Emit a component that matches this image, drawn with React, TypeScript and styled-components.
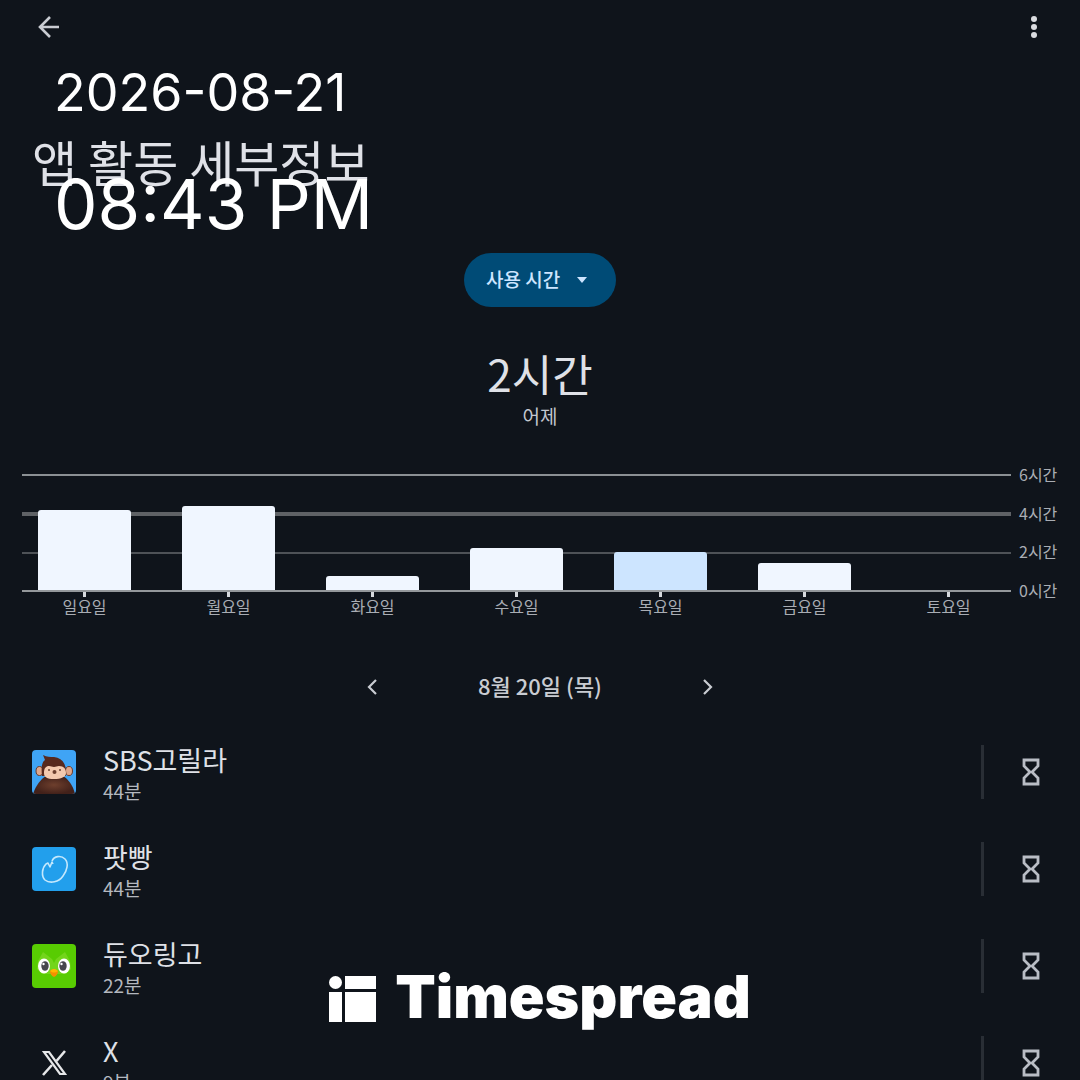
import React from "react";
import styled, { createGlobalStyle } from "styled-components";

const GlobalStyle = createGlobalStyle`
  * { box-sizing: border-box; }
  body {
    margin: 0;
    background: #0f141b;
    color: #dfe1e7;
    font-family: "Noto Sans CJK KR", sans-serif;
  }
  button { padding: 0; border: 0; background: none; color: inherit; font: inherit; cursor: pointer; }
`;

const Screen = styled.div`
  position: relative;
  height: 100vh;
  overflow: hidden;
  display: flex;
  flex-direction: column;
`;

const TopBar = styled.header`
  display: flex;
  justify-content: space-between;
  flex: none;
  height: 54px;
  padding: 0 22px 0 25px;
`;

const IconButton = styled.button`
  display: grid;
  place-items: center;
  width: 48px;
  height: 54px;
  color: #c9ccd2;
`;

const Title = styled.h1`
  margin: 0;
  padding: 71px 32px 0;
  font-size: 49px;
  line-height: 72px;
  font-weight: 400;
`;

const Main = styled.main`
  display: flex;
  flex-direction: column;
  flex: none;
`;

const Picker = styled.div`
  display: grid;
  align-self: center;
  align-items: center;
  margin-top: 56px;
  color: #cde5ff;
`;

const PickerSelect = styled.select`
  grid-area: 1 / 1;
  appearance: none;
  width: 152px;
  height: 54px;
  padding: 0 22px 4px;
  border: 0;
  border-radius: 27px;
  background: #004b76;
  color: inherit;
  font-family: inherit;
  font-size: 19px;
  font-weight: 500;
`;

const PickerArrow = styled.svg`
  grid-area: 1 / 1;
  justify-self: end;
  margin-right: 29px;
  pointer-events: none;
`;

const Total = styled.p`
  margin: 34px 0 0;
  text-align: center;
  font-size: 44px;
  line-height: 64px;
`;

const TotalCaption = styled.p`
  margin: 0;
  text-align: center;
  font-size: 19px;
  line-height: 22px;
  color: #c2c7cf;
`;

const Chart = styled.figure`
  display: grid;
  grid-template-columns: 1fr 39px;
  column-gap: 8px;
  margin: 47px 22px 0;
  color: #a9adb4;
  font-size: 16px;
`;

const Plot = styled.div`
  display: grid;
  height: 118px;
`;

const GridLines = styled.div`
  grid-area: 1 / 1;
  display: flex;
  flex-direction: column;
  justify-content: space-between;
`;

const GridLine = styled.div<{ $weight: number; $color: string }>`
  height: ${(p) => p.$weight}px;
  background: ${(p) => p.$color};
`;

const Bars = styled.div`
  grid-area: 1 / 1;
  display: grid;
  grid-template-columns: repeat(7, 1fr);
  column-gap: 51px;
  align-items: end;
  padding: 2px 16px 2px;
`;

const Bar = styled.div<{ $selected: boolean }>`
  border-radius: 3px 3px 0 0;
  background: ${(p) => (p.$selected ? "#cde5ff" : "#f0f6ff")};
`;

const Scale = styled.div`
  display: flex;
  flex-direction: column;
  justify-content: space-between;
  margin: -11px 0 -9px;
  line-height: 22px;
  white-space: nowrap;
`;

const Days = styled.div`
  display: grid;
  grid-template-columns: repeat(7, 1fr);
  column-gap: 51px;
  padding: 0 16px;
`;

const Day = styled.div`
  display: flex;
  flex-direction: column;
  align-items: center;
  line-height: 22px;
  white-space: nowrap;

  &::before {
    content: "";
    width: 3px;
    height: 5px;
    margin-bottom: -2px;
    background: #d5d8dc;
  }
`;

const DateNav = styled.nav`
  display: flex;
  align-items: center;
  justify-content: space-between;
  align-self: center;
  width: 383px;
  height: 54px;
  margin-top: 43px;
  font-size: 22px;
  font-weight: 500;
  color: #c9ccd2;
`;

const DateLabel = styled.span`
  padding-bottom: 4px;
`;

const AppList = styled.ul`
  margin: 9px 0 0;
  padding: 0;
  list-style: none;
`;

const AppRow = styled.li`
  display: flex;
  align-items: center;
  height: 97px;
  padding: 0 25px 0 32px;
`;

const AppText = styled.div`
  flex: 1;
  margin-left: 27px;
  padding-top: 2px;
`;

const AppName = styled.div`
  font-size: 27px;
  line-height: 36px;
`;

const AppTime = styled.div`
  font-size: 19px;
  line-height: 26px;
  color: #b4b8bf;
`;

const TimerButton = styled(IconButton)`
  width: 74px;
  padding-left: 22px;
  border-left: 3px solid #292e35;
  color: #b9bdc5;
`;

const Clock = styled.div`
  position: absolute;
  top: 60px;
  left: 54px;
  color: #fff;
  font-family: Inter, sans-serif;
`;

const ClockDate = styled.div`
  font-size: 52px;
  line-height: 66px;
`;

const ClockTime = styled.div`
  margin-top: 34px;
  font-size: 69px;
  line-height: 88px;
`;

const Brand = styled.div`
  position: absolute;
  left: 0;
  right: 0;
  bottom: 48px;
  display: flex;
  justify-content: center;
  align-items: center;
  gap: 18px;
  color: #fff;
  font-family: Inter, sans-serif;
  font-size: 59px;
  font-weight: 900;
  line-height: 70px;
`;

const BrandMark = styled.svg`
  margin-top: 4px;
`;

const week = [
  { day: "일요일", hours: 4.2 },
  { day: "월요일", hours: 4.4 },
  { day: "화요일", hours: 0.75 },
  { day: "수요일", hours: 2.2 },
  { day: "목요일", hours: 2, selected: true },
  { day: "금요일", hours: 1.4 },
  { day: "토요일", hours: 0 },
];

const GorillaIcon = () => (
  <svg width="44" height="44" viewBox="0 0 44 44" aria-hidden="true">
    <defs>
      <clipPath id="gorilla"><rect width="44" height="44" rx="4" /></clipPath>
      <radialGradient id="fur"><stop stopColor="#6e3f2d" /><stop offset="1" stopColor="#42211a" /></radialGradient>
    </defs>
    <g clipPath="url(#gorilla)">
      <rect width="44" height="44" fill="#3fa4f5" />
      <ellipse cx="7.500" cy="21" rx="3.500" ry="4.500" fill="#dfa78c" stroke="#6b3b2b" />
      <ellipse cx="37" cy="21" rx="3.500" ry="4.500" fill="#dfa78c" stroke="#6b3b2b" />
      <path d="M1 44C4 35 9 29 14 26h17c5 3 10 9 12 18Z" fill="url(#fur)" />
      <path d="M10 26C9 17 10 12 13 10L11 5c4 2 7 2 11 2 9 1 13 8 12 19Z" fill="#57291e" />
      <path d="M12 23c0-5 2-7 5-7 2 0 3 1 5 1s3-1 5-1c5 0 7 3 7 7 0 4-5 6-12 6s-10-2-10-6Z" fill="#f3c9af" />
      <circle cx="17" cy="20" r="1" fill="#6a4233" />
      <circle cx="28" cy="20" r="1" fill="#6a4233" />
      <ellipse cx="22.500" cy="22" rx="2" ry="2" fill="#6d4030" />
    </g>
  </svg>
);

const PodIcon = () => (
  <svg width="44" height="44" viewBox="0 0 44 44" fill="none" aria-hidden="true">
    <rect width="44" height="44" rx="4" fill="#229fec" />
    <path d="M20 14c2-5 9-6 13-2 4 4 2 12-2 17-4 6-13 8-18 4-4-4-3-12 1-16l2-1 2 4 2-5 1 2" stroke="#c4e8fd" strokeWidth="1.6" strokeLinejoin="round" />
  </svg>
);

const OwlIcon = () => (
  <svg width="44" height="44" viewBox="0 0 44 44" aria-hidden="true">
    <rect width="44" height="44" rx="4" fill="#58cc02" />
    <path d="M6 17 11 8l9 7 2 4 2-4 9-7 5 9 1 8-5 5H10l-5-5Z" fill="#73d51b" />
    <ellipse cx="12" cy="22" rx="6" ry="7.5" fill="#fff" />
    <ellipse cx="32" cy="22" rx="6" ry="7.5" fill="#fff" />
    <ellipse cx="13" cy="22" rx="3.7" ry="4.8" fill="#47474d" />
    <ellipse cx="31" cy="22" rx="3.7" ry="4.8" fill="#47474d" />
    <circle cx="11.500" cy="20" r="1.2" fill="#fff" />
    <circle cx="29.500" cy="20" r="1.2" fill="#fff" />
    <path d="M18 27q4-4 8 0 0 4-4 6-4-2-4-6Z" fill="#f49000" />
    <path d="M18 27q4-4 8 0-4 3-8 0Z" fill="#ffb800" />
  </svg>
);

const XIcon = () => (
  <svg width="44" height="44" viewBox="0 0 44 44" fill="none" stroke="#e6e7e9" aria-hidden="true">
    <path d="M12 11h5l16 22h-5Z" strokeWidth="2.2" />
    <path d="M33 10 24.500 20M20 24l-9 10" strokeWidth="2.6" />
  </svg>
);

const Hourglass = () => (
  <svg width="18" height="28" viewBox="0 0 18 28" fill="none" stroke="currentColor" strokeWidth="2.8" aria-hidden="true">
    <path d="M2 2h14v6l-6 6 6 6v6H2v-6l6-6-6-6Z" />
  </svg>
);

const Chevron = ({ flip = false }: { flip?: boolean }) => (
  <svg width="16" height="18" viewBox="0 0 16 18" fill="none" stroke="currentColor" strokeWidth="2.2" aria-hidden="true">
    <path d={flip ? "m4 2 7 7-7 7" : "m11 2-7 7 7 7"} />
  </svg>
);

const apps = [
  { name: "SBS고릴라", time: "44분", Icon: GorillaIcon },
  { name: "팟빵", time: "44분", Icon: PodIcon },
  { name: "듀오링고", time: "22분", Icon: OwlIcon },
  { name: "X", time: "9분", Icon: XIcon },
];

export default function App() {
  return (
    <>
      <GlobalStyle />
      <Screen>
        <TopBar>
          <IconButton aria-label="뒤로">
            <svg width="22" height="22" viewBox="0 0 22 22" fill="none" stroke="currentColor" strokeWidth="2.6" aria-hidden="true">
              <path d="M21 11H2M12 1 2 11l10 10" />
            </svg>
          </IconButton>
          <IconButton aria-label="더보기">
            <svg width="8" height="24" viewBox="0 0 8 24" fill="#dadce0" aria-hidden="true">
              <circle cx="4" cy="4" r="3" />
              <circle cx="4" cy="12" r="3" />
              <circle cx="4" cy="20" r="3" />
            </svg>
          </IconButton>
        </TopBar>
        <Title>앱 활동 세부정보</Title>
        <Main>
          <Picker>
            <PickerSelect aria-label="표시 항목" defaultValue="time">
              <option value="time">사용 시간</option>
            </PickerSelect>
            <PickerArrow width="10" height="6" viewBox="0 0 10 6" fill="currentColor" aria-hidden="true">
              <path d="M0 0h10L5 6Z" />
            </PickerArrow>
          </Picker>
          <Total>2시간</Total>
          <TotalCaption>어제</TotalCaption>
          <Chart>
            <Plot>
              <GridLines>
                <GridLine $weight={2} $color="#8b9094" />
                <GridLine $weight={4} $color="#5f6266" />
                <GridLine $weight={2} $color="#4e5257" />
                <GridLine $weight={2} $color="#94989b" />
              </GridLines>
              <Bars>
                {week.map((d) => (
                  <Bar key={d.day} $selected={!!d.selected} style={{ height: `${(d.hours / 6) * 100}%` }} />
                ))}
              </Bars>
            </Plot>
            <Scale>
              <span>6시간</span>
              <span>4시간</span>
              <span>2시간</span>
              <span>0시간</span>
            </Scale>
            <Days>
              {week.map((d) => (
                <Day key={d.day}>{d.day}</Day>
              ))}
            </Days>
          </Chart>
          <DateNav>
            <IconButton aria-label="이전 날짜"><Chevron /></IconButton>
            <DateLabel>8월 20일 (목)</DateLabel>
            <IconButton aria-label="다음 날짜"><Chevron flip /></IconButton>
          </DateNav>
          <AppList>
            {apps.map(({ name, time, Icon }) => (
              <AppRow key={name}>
                <Icon />
                <AppText>
                  <AppName>{name}</AppName>
                  <AppTime>{time}</AppTime>
                </AppText>
                <TimerButton aria-label={`${name} 타이머 설정`}><Hourglass /></TimerButton>
              </AppRow>
            ))}
          </AppList>
        </Main>
        <Clock>
          <ClockDate>2026-08-21</ClockDate>
          <ClockTime>08:43 PM</ClockTime>
        </Clock>
        <Brand>
          <BrandMark width="48" height="47" viewBox="0 0 48 47" fill="currentColor" aria-hidden="true">
            <circle cx="6.500" cy="6.500" r="6.500" />
            <path d="M16 0h31v13H16ZM0 16h13v30H0ZM16 16h31v30H16Z" />
          </BrandMark>
          Timespread
        </Brand>
      </Screen>
    </>
  );
}
